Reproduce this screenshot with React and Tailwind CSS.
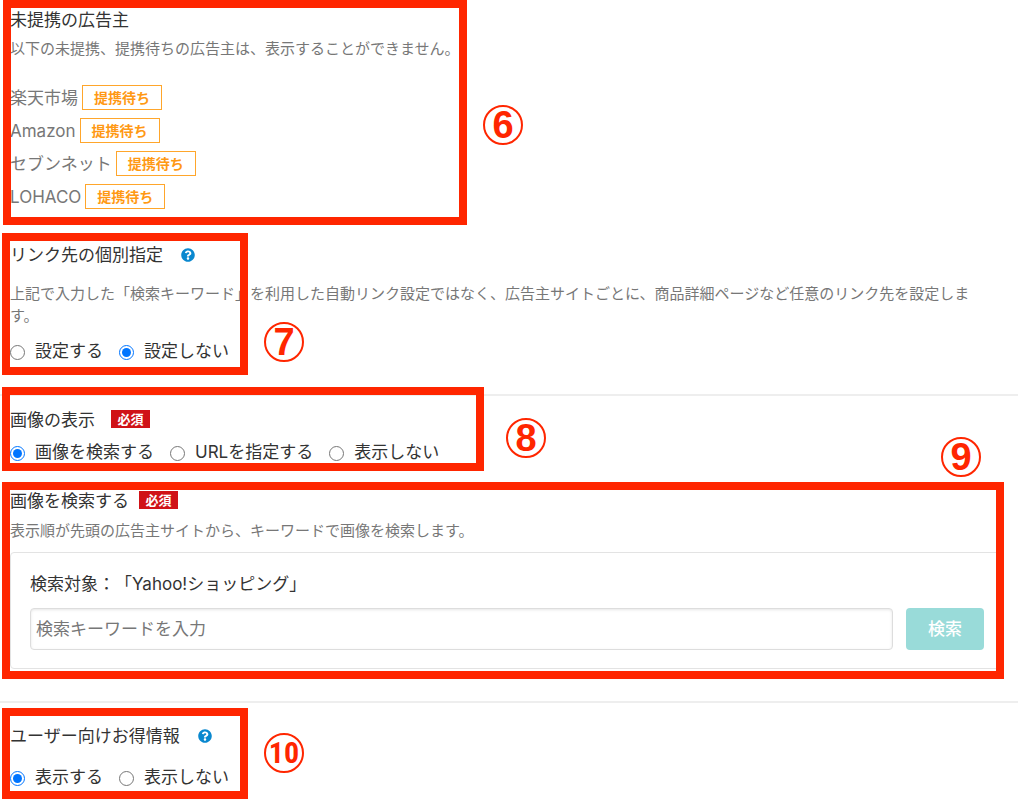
import React, { useState } from 'react';
import { FaQuestionCircle } from 'react-icons/fa';

const pendingAdvertisers = ['楽天市場', 'Amazon', 'セブンネット', 'LOHACO'];

// Red outline drawn over a section
const Frame = ({ className }) => (
  <div aria-hidden="true" className={`absolute border-8 border-[#ff2600] pointer-events-none ${className}`} />
);

// Circled step number next to a frame
const Marker = ({ className, children }) => (
  <span className={`absolute w-10 h-10 rounded-full border-2 border-[#ff2600] text-[#ff2600] font-bold flex items-center justify-center leading-none ${className}`}>
    {children}
  </span>
);

const Required = () => (
  <span className="bg-[#d01217] text-white text-[13px] leading-[18px] font-bold w-[39px] text-center mb-[2px]">必須</span>
);

const Help = () => (
  <button type="button" aria-label="ヘルプ" className="text-[#0a88cf] text-sm ml-1">
    <FaQuestionCircle />
  </button>
);

const RadioGroup = ({ name, labelledBy, options, value, onChange, className }) => (
  <div role="radiogroup" aria-labelledby={labelledBy} className={`flex flex-wrap gap-x-4 ${className}`}>
    {options.map((option) => (
      <label key={option} className="flex items-center leading-6">
        <input
          type="radio"
          name={name}
          className="w-[15px] h-[15px] mt-[2px] mr-[10px]"
          checked={value === option}
          onChange={() => onChange(option)}
        />
        {option}
      </label>
    ))}
  </div>
);

const App = () => {
  const [linkMode, setLinkMode] = useState('設定しない');
  const [imageMode, setImageMode] = useState('画像を検索する');
  const [benefitMode, setBenefitMode] = useState('表示する');
  const [keyword, setKeyword] = useState('');

  return (
    <main lang="ja" className="bg-white text-[#333] text-[17px] leading-6 font-['Inter','Noto_Sans_CJK_JP',sans-serif] [text-spacing-trim:space-all] pr-[6px] overflow-hidden">
      <section className="relative pl-[10px] pt-2 pb-4">
        <h2>未提携の広告主</h2>
        <p className="mt-[6px] text-[15px] leading-[22px] text-[#777]">以下の未提携、提携待ちの広告主は、表示することができません。</p>
        <ul className="mt-[21px] text-[#777]">
          {pendingAdvertisers.map((name) => (
            <li key={name} className="flex items-center gap-1 h-[33px]">
              {name}
              <span className="border border-[#ffa62b] text-[#ff9914] text-sm leading-[23px] font-bold w-20 text-center">提携待ち</span>
            </li>
          ))}
        </ul>
        <Frame className="left-[3px] top-0 bottom-1 w-[464px]" />
        <Marker className="left-[483px] top-[105px] text-[38px] font-['Liberation_Sans',sans-serif]">6</Marker>
      </section>

      <section className="relative pl-[10px] pt-[14px] pb-[31px] border-b-2 border-[#eee]">
        <div className="flex items-center gap-[14px]">
          <h2 id="link-title">リンク先の個別指定</h2>
          <Help />
        </div>
        <p className="mt-4 pr-8 text-[15px] leading-[22px] text-[#777]">
          上記で入力した「検索キーワード」を利用した自動リンク設定ではなく、広告主サイトごとに、商品詳細ページなど任意のリンク先を設定します。
        </p>
        <RadioGroup
          name="link"
          labelledBy="link-title"
          options={['設定する', '設定しない']}
          value={linkMode}
          onChange={setLinkMode}
          className="mt-3"
        />
        <Frame className="left-[2px] top-1 bottom-[19px] w-[246px]" />
        <Marker className="left-[264px] top-[93px] text-[38px] font-['Liberation_Sans',sans-serif]">7</Marker>
      </section>

      <section className="relative pl-[10px] pt-3 pb-[14px]">
        <div className="flex items-center gap-4">
          <h2 id="image-title">画像の表示</h2>
          <Required />
        </div>
        <RadioGroup
          name="image"
          labelledBy="image-title"
          options={['画像を検索する', 'URLを指定する', '表示しない']}
          value={imageMode}
          onChange={setImageMode}
          className="mt-2"
        />
        <Frame className="left-[2px] -top-[9px] bottom-[7px] w-[482px]" />
        <Marker className="left-[506px] top-[22px] text-[38px] font-['Liberation_Sans',sans-serif]">8</Marker>
      </section>

      <section className="relative pl-[10px] pr-[14px] pt-[11px] pb-8 border-b-2 border-[#eee]">
        <div className="flex items-center gap-[10px]">
          <h2>画像を検索する</h2>
          <Required />
        </div>
        <p className="mt-[7px] text-[15px] leading-[22px] text-[#777]">表示順が先頭の広告主サイトから、キーワードで画像を検索します。</p>
        <form
          onSubmit={(e) => e.preventDefault()}
          className="mt-[10px] border border-[#e3e3e3] rounded pl-[19px] pr-[19px] pt-[19px] pb-[18px]"
        >
          <label htmlFor="keyword" className="block">検索対象：「Yahoo!ショッピング」</label>
          <div className="flex gap-[13px] mt-3">
            <input
              id="keyword"
              type="text"
              placeholder="検索キーワードを入力"
              value={keyword}
              onChange={(e) => setKeyword(e.target.value)}
              className="flex-1 min-w-0 h-[42px] px-[5px] border border-[#ddd] rounded shadow-[inset_0_1px_3px_rgba(0,0,0,0.1)] placeholder:text-[#777] outline-none"
            />
            <button type="submit" className="w-[78px] h-[42px] rounded bg-[#99dbd9] text-white font-medium">検索</button>
          </div>
        </form>
        <Frame className="left-[2px] right-[14px] top-1 bottom-[22px]" />
        <Marker className="right-[37px] -top-[41px] text-[38px] font-['Liberation_Sans',sans-serif]">9</Marker>
      </section>

      <section className="relative pl-[10px] pt-[21px] pb-[13px]">
        <div className="flex items-center gap-[14px]">
          <h2 id="benefit-title">ユーザー向けお得情報</h2>
          <Help />
        </div>
        <RadioGroup
          name="benefit"
          labelledBy="benefit-title"
          options={['表示する', '表示しない']}
          value={benefitMode}
          onChange={setBenefitMode}
          className="mt-[17px]"
        />
        <Frame className="left-[2px] top-[5px] bottom-[3px] w-[246px]" />
        <Marker className="left-[264px] top-[30px] text-[30px] font-['Roboto_Condensed','Open_Sans_Condensed','Roboto',sans-serif]">10</Marker>
      </section>
    </main>
  );
};

export default App;
